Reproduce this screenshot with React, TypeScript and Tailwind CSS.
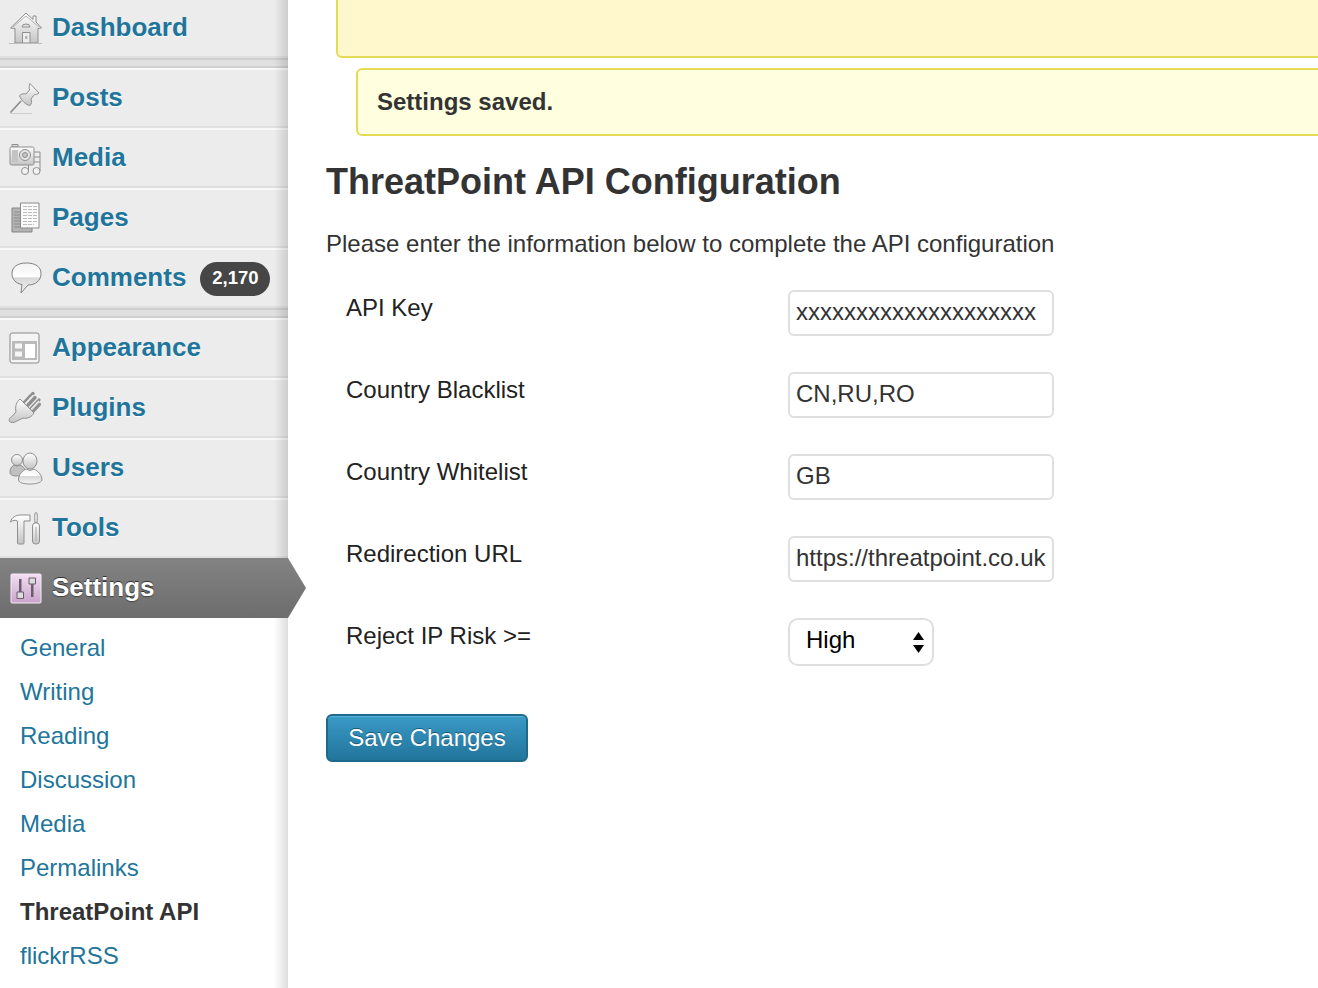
import React from "react";

const S = "#8f8f8f";

function Defs() {
  return (
    <svg className="absolute w-0 h-0">
      <defs>
        <linearGradient id="g1" x1="0" y1="0" x2="0" y2="1">
          <stop offset="0" stopColor="#ffffff" />
          <stop offset="1" stopColor="#c4c4c4" />
        </linearGradient>
        <linearGradient id="g2" x1="0" y1="0" x2="0" y2="1">
          <stop offset="0" stopColor="#f2f2f2" />
          <stop offset="0.45" stopColor="#ffffff" />
          <stop offset="0.5" stopColor="#d8d8d8" />
          <stop offset="1" stopColor="#f4f4f4" />
        </linearGradient>
        <linearGradient id="g3" x1="0" y1="0" x2="0" y2="1">
          <stop offset="0" stopColor="#f3dff3" />
          <stop offset="1" stopColor="#c9a3cb" />
        </linearGradient>
      </defs>
    </svg>
  );
}

function Svg({ children }: { children: React.ReactNode }) {
  return (
    <svg viewBox="0 0 36 36" className="w-9 h-9 shrink-0" fill="none" stroke={S} strokeWidth="1" strokeLinejoin="round">
      {children}
    </svg>
  );
}

const Home = () => (
  <Svg>
    <path d="M18 3 L25 9.5 V6 H28 V12 L33.5 18 L30 18.5 V33 H7 V18.5 L2.5 18 Z" fill="url(#g1)" />
    <path d="M5 17 L18 6 L31 17" stroke="#b5b5b5" />
    <path d="M14 17 a4 3 0 0 1 8 0 Z" fill="#e5e5e5" />
    <rect x="14.5" y="22.5" width="7.5" height="10.5" fill="#ededed" />
    <rect x="17" y="26" width="2.5" height="3" fill="#b5b5b5" stroke="none" />
    <path d="M1 33.5 H34" stroke="#bdbdbd" />
  </Svg>
);
const Pin = () => (
  <Svg>
    <path d="M2.5 32.5 L13 21" stroke="#8a8a8a" strokeWidth="1.6" />
    <path d="M22 3.5 L31 13 C29.5 14.5 27.5 14.5 26.5 14.5 L23 19 C24 22 23.5 24 22 25.5 C18 25 13 20.5 11.5 15.5 C13 14 15.5 13.5 18 14 L21.5 10 C21 8 21 5 22 3.5 Z" fill="url(#g1)" />
    <path d="M2 33.5 H24" stroke="#cfcfcf" />
  </Svg>
);
const Media = () => (
  <Svg>
    <rect x="4" y="4.5" width="6" height="2.5" fill="#ddd" />
    <rect x="2" y="7" width="24" height="18" rx="1.5" fill="url(#g1)" />
    <rect x="4" y="10" width="6" height="12" fill="#c4c4c4" stroke="none" />
    <circle cx="17" cy="15" r="5.5" fill="#e4e4e4" />
    <circle cx="17" cy="15" r="2.5" fill="#c4c4c4" />
    <path d="M26 12 H32 V31 M26 17 H32 M26 22 H32 M20.5 25 V31" />
    <circle cx="17" cy="31" r="3.5" fill="#f2f2f2" />
    <circle cx="28.5" cy="31" r="3.5" fill="#f2f2f2" />
  </Svg>
);
const Pages = () => (
  <Svg>
    <rect x="4" y="8" width="20" height="24" fill="#b4b4b4" stroke="#858585" />
    <path d="M6 12 H12 M6 15 H12 M6 18 H12 M6 21 H12 M6 24 H12 M6 27 H18" stroke="#8c8c8c" />
    <rect x="12.5" y="3" width="18.5" height="25" fill="#fafafa" stroke="#8a8a8a" />
    <path d="M15 6.5 H29 M15 9.5 H29 M15 12.5 H29 M15 15.5 H29 M15 18.5 H29 M15 21.5 H29 M15 24.5 H26" stroke="#bcbcbc" strokeDasharray="4 1" />
  </Svg>
);
const Comment = () => (
  <Svg>
    <path d="M18.5 3 C27 3 33 6.5 33 13.5 C33 21 27 25 20 25 L13 33 L14 24.5 C8 23.5 4 19.5 4 13.5 C4 6.5 10 3 18.5 3 Z" fill="url(#g2)" stroke="#808080" />
  </Svg>
);
const Appearance = () => (
  <Svg>
    <rect x="2" y="3" width="29" height="30" rx="2" fill="#f4f4f4" stroke="#8a8a8a" />
    <rect x="4" y="11" width="25" height="19" fill="#bababa" stroke="none" />
    <rect x="7" y="13.5" width="7" height="5" fill="#f6f6f6" stroke="none" />
    <rect x="7" y="21.5" width="7" height="5" fill="#f6f6f6" stroke="none" />
    <rect x="17" y="14" width="10" height="14" fill="#ffffff" stroke="none" />
  </Svg>
);
const Plugin = () => (
  <Svg>
    <path d="M16.5 12.5 L25 3.5 M20 15 L27 7.5" stroke="#8f8f8f" strokeWidth="3.4" strokeLinecap="round" />
    <path d="M17.5 13.5 L25 5.5" stroke="#f2f2f2" strokeWidth="1.4" strokeLinecap="round" />
    <path d="M22.5 19 L31 10 M25 21.5 L31.5 14.5" stroke="#8f8f8f" strokeWidth="3.2" strokeLinecap="round" />
    <path d="M23.5 19 L30.5 11.5" stroke="#f2f2f2" strokeWidth="1.4" strokeLinecap="round" />
    <path d="M12 9 L26 23 C24 27 19 29 15 28 L9 31 C6 33 3 33 1.5 31.5 C0.5 29.5 1.5 27.5 4.5 26 L8 22 C7 17 8 12 12 9 Z" fill="url(#g1)" />
  </Svg>
);
const Users = () => (
  <Svg>
    <path d="M2 22 C2 18 4.5 16 6 15 Q9 17 12 15 C14.5 16 17 18 17 21 C14 25 11 26 8.5 26 C5 26 2 25 2 22 Z" fill="#c0c0c0" stroke="#8d8d8d" />
    <circle cx="9" cy="10" r="5.5" fill="url(#g1)" />
    <path d="M10.5 30 C10.5 24 14.5 21 18 19 Q22 22 26 19 C30 21 34 25 34 30 C33 33 27 34 22 34 C16 34 11 33 10.5 30 Z" fill="url(#g2)" />
    <ellipse cx="22" cy="11" rx="7" ry="8" fill="url(#g1)" />
  </Svg>
);
const Tools = () => (
  <Svg>
    <path d="M2.5 12 C3.5 7 8 5 13 5 H20 V5 H22 V11 H16 V33 Q16 34 15 34 H10.5 Q9.5 34 9.5 33 V11 C7 10 5 10 2.5 12 Z" fill="url(#g1)" />
    <path d="M28 2.5 C29.5 2.5 29.5 6 29 13 H27 C26.5 6 26.5 2.5 28 2.5 Z" fill="#f0f0f0" />
    <rect x="24.5" y="13" width="7" height="21" rx="3" fill="url(#g1)" />
    <path d="M28 17 V31" stroke="#aaa" />
  </Svg>
);
const Settings = () => (
  <Svg>
    <rect x="3" y="4" width="30" height="29" rx="1" fill="url(#g3)" stroke="#f7e9f7" />
    <rect x="11" y="9" width="2.5" height="15" fill="#6c5b6e" stroke="none" />
    <rect x="9" y="22" width="6.5" height="6.5" fill="#dcdcdc" stroke="#6c5b6e" />
    <rect x="23" y="12" width="2.5" height="15" fill="#6c5b6e" stroke="none" />
    <rect x="21" y="8" width="6.5" height="6" fill="#dcdcdc" stroke="#6c5b6e" />
  </Svg>
);

function Row({ icon, label, children }: { icon: React.ReactNode; label: string; children?: React.ReactNode }) {
  return (
    <div className="h-[60px] flex items-center pl-2 gap-2 bg-[#ececec] border-t-2 border-b-2 border-t-[#f9f9f9] border-b-[#e0e0e0] text-[#21759b] font-bold text-[26px] [text-shadow:0_1px_0_#fff]">
      {icon}
      <span className="-mt-[1px]">{label}</span>
      {children}
    </div>
  );
}

function Sep() {
  return <div className="h-[10px] bg-[#e0e0e0] border-t-2 border-b-2 border-[#cfcfcf]" />;
}

function Sub({ label, active }: { label: string; active?: boolean }) {
  return (
    <div className={"h-[44px] flex items-center pl-5 text-[24px] " + (active ? "font-bold text-[#333]" : "text-[#21759b]")}>
      {label}
    </div>
  );
}

function Field({ label, value }: { label: string; value: string }) {
  return (
    <>
      <div className="text-[24px] text-[#222] pl-5 leading-[36px]">{label}</div>
      <input
        readOnly
        value={value}
        className="w-[266px] h-[46px] border-2 border-[#dfdfdf] rounded-[6px] px-[6px] pb-[3px] text-[24px] text-[#333] bg-white outline-none"
      />
    </>
  );
}

export default function App() {
  return (
    <div className="h-[988px] w-[1318px] overflow-hidden flex bg-white font-['Liberation_Sans',Arial,sans-serif]">
      <Defs />
      <aside className="relative w-[288px] shrink-0 h-[990px] bg-white -mt-[2px] z-10">
        <div>
          <Row icon={<Home />} label="Dashboard" />
          <Sep />
          <Row icon={<Pin />} label="Posts" />
          <Row icon={<Media />} label="Media" />
          <Row icon={<Pages />} label="Pages" />
          <Row icon={<Comment />} label="Comments">
            <span className="ml-[6px] mt-[2px] pb-[2px] h-[34px] w-[70px] rounded-full bg-[#464646] text-white text-[18.5px] flex items-center justify-center [text-shadow:none]">
              2,170
            </span>
          </Row>
          <Sep />
          <Row icon={<Appearance />} label="Appearance" />
          <Row icon={<Plugin />} label="Plugins" />
          <Row icon={<Users />} label="Users" />
          <Row icon={<Tools />} label="Tools" />
        </div>
        <div className="absolute top-0 right-0 w-[14px] h-full bg-gradient-to-r from-black/0 to-black/[0.13]" />
        <div className="relative h-[60px] -mr-[18px] flex items-center pl-2 gap-2 bg-gradient-to-b from-[#838383] to-[#6d6d6d] [clip-path:polygon(0_0,288px_0,306px_50%,288px_100%,0_100%)] text-white font-bold text-[26px] [text-shadow:0_-1px_0_#333,0_1px_1px_#444]">
          <Settings />
          <span className="-mt-[1px]">Settings</span>
        </div>
        <div className="pt-2">
          <Sub label="General" />
          <Sub label="Writing" />
          <Sub label="Reading" />
          <Sub label="Discussion" />
          <Sub label="Media" />
          <Sub label="Permalinks" />
          <Sub label="ThreatPoint API" active />
          <Sub label="flickrRSS" />
        </div>
      </aside>
      <main className="flex-1 min-w-0 pl-[38px] overflow-hidden">
        <div className="h-[58px] ml-[10px] -mr-5 bg-[#fff8cc] border-2 border-t-0 border-[#e6db55] rounded-bl-[6px]" />
        <div className="h-[68px] mt-[10px] ml-[30px] -mr-5 bg-[#ffffe0] border-2 border-[#e6db55] rounded-l-[6px] flex items-center pl-[19px] text-[24px] font-bold text-[#333]">
          Settings saved.
        </div>
        <h2 className="mt-[24px] text-[36px] leading-[44px] font-bold text-[#333]">ThreatPoint API Configuration</h2>
        <p className="mt-[22px] text-[24px] leading-[36px] text-[#333]">
          Please enter the information below to complete the API configuration
        </p>
        <div className="mt-[28px] grid grid-cols-[462px_1fr] gap-y-[36px] items-start">
          <Field label="API Key" value="xxxxxxxxxxxxxxxxxxxx" />
          <Field label="Country Blacklist" value="CN,RU,RO" />
          <Field label="Country Whitelist" value="GB" />
          <Field label="Redirection URL" value="https://threatpoint.co.uk" />
          <div className="text-[24px] text-[#222] pl-5 leading-[36px]">Reject IP Risk &gt;=</div>
          <div className="relative w-[146px] h-[48px]">
            <select
              defaultValue="High"
              className="appearance-none w-full h-full border-2 border-[#dfdfdf] rounded-[10px] pl-4 pb-[5px] text-[24px] text-black bg-white outline-none"
            >
              <option>High</option>
            </select>
            <svg viewBox="0 0 11 21" className="absolute right-[10px] top-[14px] w-[11px] h-[21px]" fill="#000">
              <path d="M5.5 0 L11 8 H0 Z" />
              <path d="M5.5 21 L11 13 H0 Z" />
            </svg>
          </div>
        </div>
        <button className="mt-[48px] w-[202px] h-[48px] rounded-[6px] border-2 border-[#1f6a8c] bg-gradient-to-b from-[#3a9ac6] to-[#21759b] text-white text-[24px] [text-shadow:0_-1px_0_#1a5a78] shadow-[inset_0_1px_0_#5ab0d8]">
          Save Changes
        </button>
      </main>
    </div>
  );
}
